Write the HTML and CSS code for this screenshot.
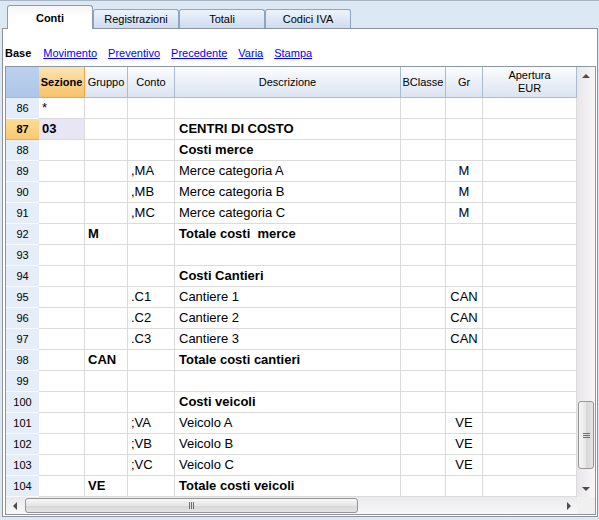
FILE: index.html
```html
<!DOCTYPE html>
<html lang="it">
<head>
    <meta charset="UTF-8">
    <title>Conti</title>
    <link rel="stylesheet" href="styles.css">
</head>
<body>
    <div class="tabs">
        <div class="tab active">Conti</div>
        <div class="tab">Registrazioni</div>
        <div class="tab">Totali</div>
        <div class="tab">Codici IVA</div>
    </div>

    <div class="panel">
        <div class="views">
            <b>Base</b>
            <a href="#">Movimento</a>
            <a href="#">Preventivo</a>
            <a href="#">Precedente</a>
            <a href="#">Varia</a>
            <a href="#">Stampa</a>
        </div>

        <div class="frame">
            <div class="sheet">
                <div class="row head">
                    <div class="c num"></div>
                    <div class="c sez">Sezione</div>
                    <div class="c grp">Gruppo</div>
                    <div class="c cto">Conto</div>
                    <div class="c des">Descrizione</div>
                    <div class="c bcl">BClasse</div>
                    <div class="c gr">Gr</div>
                    <div class="c ap">Apertura<br>EUR</div>
                </div>
                <div class="row"><div class="c num">86</div><div class="c sez">*</div><div class="c grp"></div><div class="c cto"></div><div class="c des"></div><div class="c bcl"></div><div class="c gr"></div><div class="c ap"></div></div>
                <div class="row cur"><div class="c num">87</div><div class="c sez b">03</div><div class="c grp"></div><div class="c cto"></div><div class="c des b">CENTRI DI COSTO</div><div class="c bcl"></div><div class="c gr"></div><div class="c ap"></div></div>
                <div class="row"><div class="c num">88</div><div class="c sez"></div><div class="c grp"></div><div class="c cto"></div><div class="c des b">Costi merce</div><div class="c bcl"></div><div class="c gr"></div><div class="c ap"></div></div>
                <div class="row"><div class="c num">89</div><div class="c sez"></div><div class="c grp"></div><div class="c cto">,MA</div><div class="c des">Merce categoria A</div><div class="c bcl"></div><div class="c gr">M</div><div class="c ap"></div></div>
                <div class="row"><div class="c num">90</div><div class="c sez"></div><div class="c grp"></div><div class="c cto">,MB</div><div class="c des">Merce categoria B</div><div class="c bcl"></div><div class="c gr">M</div><div class="c ap"></div></div>
                <div class="row"><div class="c num">91</div><div class="c sez"></div><div class="c grp"></div><div class="c cto">,MC</div><div class="c des">Merce categoria C</div><div class="c bcl"></div><div class="c gr">M</div><div class="c ap"></div></div>
                <div class="row"><div class="c num">92</div><div class="c sez"></div><div class="c grp b">M</div><div class="c cto"></div><div class="c des b">Totale costi  merce</div><div class="c bcl"></div><div class="c gr"></div><div class="c ap"></div></div>
                <div class="row"><div class="c num">93</div><div class="c sez"></div><div class="c grp"></div><div class="c cto"></div><div class="c des"></div><div class="c bcl"></div><div class="c gr"></div><div class="c ap"></div></div>
                <div class="row"><div class="c num">94</div><div class="c sez"></div><div class="c grp"></div><div class="c cto"></div><div class="c des b">Costi Cantieri</div><div class="c bcl"></div><div class="c gr"></div><div class="c ap"></div></div>
                <div class="row"><div class="c num">95</div><div class="c sez"></div><div class="c grp"></div><div class="c cto">.C1</div><div class="c des">Cantiere 1</div><div class="c bcl"></div><div class="c gr">CAN</div><div class="c ap"></div></div>
                <div class="row"><div class="c num">96</div><div class="c sez"></div><div class="c grp"></div><div class="c cto">.C2</div><div class="c des">Cantiere 2</div><div class="c bcl"></div><div class="c gr">CAN</div><div class="c ap"></div></div>
                <div class="row"><div class="c num">97</div><div class="c sez"></div><div class="c grp"></div><div class="c cto">.C3</div><div class="c des">Cantiere 3</div><div class="c bcl"></div><div class="c gr">CAN</div><div class="c ap"></div></div>
                <div class="row"><div class="c num">98</div><div class="c sez"></div><div class="c grp b">CAN</div><div class="c cto"></div><div class="c des b">Totale costi cantieri</div><div class="c bcl"></div><div class="c gr"></div><div class="c ap"></div></div>
                <div class="row"><div class="c num">99</div><div class="c sez"></div><div class="c grp"></div><div class="c cto"></div><div class="c des"></div><div class="c bcl"></div><div class="c gr"></div><div class="c ap"></div></div>
                <div class="row"><div class="c num">100</div><div class="c sez"></div><div class="c grp"></div><div class="c cto"></div><div class="c des b">Costi veicoli</div><div class="c bcl"></div><div class="c gr"></div><div class="c ap"></div></div>
                <div class="row"><div class="c num">101</div><div class="c sez"></div><div class="c grp"></div><div class="c cto">;VA</div><div class="c des">Veicolo A</div><div class="c bcl"></div><div class="c gr">VE</div><div class="c ap"></div></div>
                <div class="row"><div class="c num">102</div><div class="c sez"></div><div class="c grp"></div><div class="c cto">;VB</div><div class="c des">Veicolo B</div><div class="c bcl"></div><div class="c gr">VE</div><div class="c ap"></div></div>
                <div class="row"><div class="c num">103</div><div class="c sez"></div><div class="c grp"></div><div class="c cto">;VC</div><div class="c des">Veicolo C</div><div class="c bcl"></div><div class="c gr">VE</div><div class="c ap"></div></div>
                <div class="row"><div class="c num">104</div><div class="c sez"></div><div class="c grp b">VE</div><div class="c cto"></div><div class="c des b">Totale costi veicoli</div><div class="c bcl"></div><div class="c gr"></div><div class="c ap"></div></div>
            </div>

            <!-- vertical scrollbar -->
            <div class="vscroll">
                <div class="btn"><span class="arrow up"></span></div>
                <div class="track">
                    <div class="thumb"><span class="grip"></span></div>
                </div>
                <div class="btn"><span class="arrow down"></span></div>
            </div>

            <!-- horizontal scrollbar -->
            <div class="hscroll">
                <div class="btn"><span class="arrow left"></span></div>
                <div class="track">
                    <div class="thumb"><span class="grip"></span></div>
                </div>
                <div class="btn"><span class="arrow right"></span></div>
            </div>
            <div class="corner"></div>
        </div>
    </div>
</body>
</html>
```

FILE: styles.css
```css
body {
    margin: 0;
    height: 519px;
    overflow: hidden;
    background-color: #dde8f5;
    border-top: 1px solid #a9b5c5;
    font-family: "Liberation Sans", Arial, sans-serif;
    font-size: 11px;
    color: #000;
}

/* Tabs */
.tabs {
    display: flex;
    align-items: flex-end;
    height: 27px;
    padding-left: 7px;
}

.tab {
    width: 86px;
    height: 19px;
    box-sizing: border-box;
    border: 1px solid #8fa3bf;
    border-bottom: none;
    border-radius: 3px 3px 0 0;
    background: linear-gradient(#eef3fb, #cddcf1);
    text-align: center;
    line-height: 17px;
    padding-top: 1px;
}

.tab.active {
    position: relative;
    z-index: 1;
    height: 24px;
    margin-bottom: -1px;
    padding-top: 4px;
    border-color: #8d9bb0;
    background: linear-gradient(#f5f5f5, #fff 45%);
    font-weight: bold;
}

/* Panel */
.panel {
    margin: 0 1px 0 2px;
    padding: 0 1px 1px 2px;
    border: 1px solid #8f9297;
    background: #fff;
}

.views {
    display: flex;
    align-items: center;
    height: 37px;
    box-sizing: border-box;
    padding-top: 10px;
}

.views b {
    margin-right: 12px;
}

.views a {
    color: #0000ff;
    margin-right: 11px;
}

/* Grid */
.frame {
    width: 591px;
    box-sizing: border-box;
    border: 1px solid #8a95a5;
    display: grid;
    grid-template-columns: 571px 18px;
    grid-template-rows: 430px 17px;
}

.sheet {
    overflow: hidden;
}

.row {
    display: grid;
    grid-template-columns: 33px 46px 43px 47px 226px 45px 37px 94px;
    height: 21px;
}

.c {
    box-sizing: border-box;
    border-right: 1px solid #dbdbdb;
    border-bottom: 1px solid #dbdbdb;
    padding: 0 3px;
    font-size: 13px;
    line-height: 20px;
    white-space: pre;
    overflow: hidden;
}

.c.des {
    padding-left: 4px;
}

.c.gr {
    text-align: center;
}

.b {
    font-weight: bold;
}

.c.num {
    border-right: none;
    border-bottom-color: #f5f8fc;
    background: #e5edf8;
    font-size: 11px;
    text-align: center;
    padding: 0;
}

.cur .num {
    background: linear-gradient(#fcdc98, #f9c96f);
    border-bottom-color: #f1a94a;
    font-weight: bold;
}

.cur .sez {
    background: #e8e6f4;
}

/* Header row */
.row.head {
    height: 31px;
}

.head .c {
    display: flex;
    align-items: center;
    justify-content: center;
    padding: 0;
    font-size: 11px;
    line-height: 13px;
    text-align: center;
    border-right-color: #a7bbd3;
    border-bottom-color: #a7bbd3;
    background: linear-gradient(#fbfcfe, #dbe4f1);
}

.head .c.num {
    background: linear-gradient(#bcd1ee, #adc5e7);
}

.head .c.sez {
    font-weight: bold;
    border-color: #f0a448;
    background: linear-gradient(#fbe4b4, #f6c36a);
}

/* Scrollbars */
.vscroll {
    display: flex;
    flex-direction: column;
    background: linear-gradient(to right, #e8e6ea, #f7f6f8);
}

.vscroll .btn {
    height: 17px;
    display: flex;
    align-items: center;
    justify-content: center;
}

.vscroll .track {
    flex: 1;
}

.vscroll .thumb {
    margin: 317px 1px 0;
    height: 68px;
    box-sizing: border-box;
    border: 1px solid #959595;
    border-radius: 3px;
    background: linear-gradient(to right, #f6f6f6, #e6e6e6 50%, #d6d6d6 52%, #e4e4e4);
    display: flex;
    align-items: center;
    justify-content: center;
}

.vscroll .grip {
    width: 7px;
    height: 5px;
    background: repeating-linear-gradient(to bottom, #6e6e6e 0 1px, transparent 1px 2px);
}

.hscroll {
    display: flex;
    background: linear-gradient(#ebe9ed, #f7f7f8);
}

.hscroll .btn {
    width: 17px;
    display: flex;
    align-items: center;
    justify-content: center;
}

.hscroll .track {
    flex: 1;
}

.hscroll .thumb {
    margin: 1px 0 0 2px;
    width: 333px;
    height: 15px;
    box-sizing: border-box;
    border: 1px solid #959595;
    border-radius: 3px;
    background: linear-gradient(#f6f6f6, #e6e6e6 50%, #d6d6d6 52%, #e4e4e4);
    display: flex;
    align-items: center;
    justify-content: center;
}

.hscroll .grip {
    width: 5px;
    height: 7px;
    background: repeating-linear-gradient(to right, #6e6e6e 0 1px, transparent 1px 2px);
}

.corner {
    background: #f0f0f0;
}

.arrow {
    width: 0;
    height: 0;
}

.arrow.up {
    border-left: 4px solid transparent;
    border-right: 4px solid transparent;
    border-bottom: 4px solid #4c4c4c;
}

.arrow.down {
    border-left: 4px solid transparent;
    border-right: 4px solid transparent;
    border-top: 4px solid #4c4c4c;
}

.arrow.left {
    border-top: 4px solid transparent;
    border-bottom: 4px solid transparent;
    border-right: 4px solid #4c4c4c;
}

.arrow.right {
    border-top: 4px solid transparent;
    border-bottom: 4px solid transparent;
    border-left: 4px solid #4c4c4c;
}
```
